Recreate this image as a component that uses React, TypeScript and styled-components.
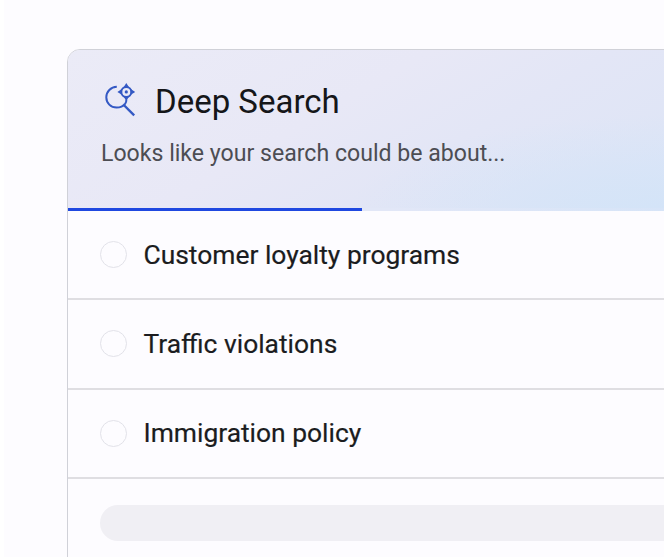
import React from "react";
import styled, { createGlobalStyle } from "styled-components";

const GlobalStyle = createGlobalStyle`
  * { box-sizing: border-box; }
  body { margin: 0; background: #fff; overflow: hidden; }
`;

const Page = styled.main`
  width: 660px;
  height: 557px;
  margin-left: 4px;
  padding: 49px 0 0 63px;
  overflow: hidden;
  background: #fdfcff;
  font-family: Roboto, sans-serif;
`;

const Card = styled.section`
  width: 640px;
  height: 560px;
  border: 1px solid #d0d1d8;
  border-radius: 13px;
  overflow: hidden;
`;

const Header = styled.header`
  height: 158px;
  padding: 32px 0 0 33px;
  background:
    radial-gradient(ellipse 320px 100px at 600px 165px, #d3e4f8 0%, rgba(211, 228, 248, 0) 100%),
    linear-gradient(150deg, #ebebf7 0%, #e8e8f6 40%, #e3e6f6 60%, #dfe5f6 80%, #dce4f7 100%);
`;

const TitleRow = styled.div`
  display: flex;
  align-items: center;
  height: 40px;
  gap: 18px;
`;

const Title = styled.h1`
  margin: 0;
  font-size: 33px;
  font-weight: 400;
  line-height: 40px;
  color: #151619;
  white-space: nowrap;
`;

const Subtitle = styled.p`
  margin: 17px 0 0;
  font-size: 23.1px;
  line-height: 30px;
  color: #4c4d53;
  white-space: nowrap;
`;

const ProgressTrack = styled.div`
  height: 3px;
  background: linear-gradient(90deg, #e2e7f7 50%, #d5e4f8 100%);
`;

const ProgressFill = styled.div`
  width: 293.5px;
  height: 3px;
  background: #1f48e0;
`;

const Options = styled.ul`
  list-style: none;
  margin: 0;
  padding: 0;
`;

const Option = styled.li`
  display: flex;
  align-items: center;
  gap: 16.5px;
  height: 89.3px;
  padding-left: 32px;
  border-bottom: 2px solid #dfdee2;
`;

const Radio = styled.span`
  flex: none;
  width: 27px;
  height: 27px;
  border: 1px solid #e2e2e9;
  border-radius: 50%;
`;

const Label = styled.span`
  font-size: 26.4px;
  line-height: 34px;
  color: #1b1c20;
  white-space: nowrap;
  -webkit-text-stroke: 0.2px #1b1c20;
`;

const Skeleton = styled.div`
  height: 36px;
  margin: 26px 0 0 32px;
  border-radius: 18px 0 0 18px;
  background: #f0eff4;
`;

const DeepSearchIcon = () => (
  <svg width="36" height="36" viewBox="0 0.8 36 36" fill="none" stroke="#3459c4" strokeWidth="2" overflow="visible">
    <path d="M15.8 3.6C9.8 3.8 5.3 8.3 5.3 14.1c0 5.8 4.5 10.3 10.3 10.3 3.4 0 6.6-1.4 8.6-4 .8-1.1 1.2-2.4 1.2-4.2" />
    <path d="M22.8 21.8 33.2 32.2" strokeWidth="2.4" />
    <circle cx="25.3" cy="8.7" r="5" />
    <path
      d="M25.3-.2l2.9 4.4h-5.8zM25.3 17.6l2.9-4.4h-5.8zM16.4 8.7l4.4-2.9v5.8zM34.2 8.7l-4.4-2.9v5.8z"
      fill="#3459c4"
      stroke="none"
    />
    <circle cx="25.3" cy="8.7" r="1.6" fill="#3459c4" stroke="none" />
  </svg>
);

const choices = ["Customer loyalty programs", "Traffic violations", "Immigration policy"];

export default function App() {
  return (
    <>
      <GlobalStyle />
      <Page>
        <Card>
          <Header>
            <TitleRow>
              <DeepSearchIcon />
              <Title>Deep Search</Title>
            </TitleRow>
            <Subtitle>Looks like your search could be about...</Subtitle>
          </Header>
          <ProgressTrack>
            <ProgressFill />
          </ProgressTrack>
          <Options>
            {choices.map((name) => (
              <Option key={name}>
                <Radio />
                <Label>{name}</Label>
              </Option>
            ))}
          </Options>
          <Skeleton />
        </Card>
      </Page>
    </>
  );
}
